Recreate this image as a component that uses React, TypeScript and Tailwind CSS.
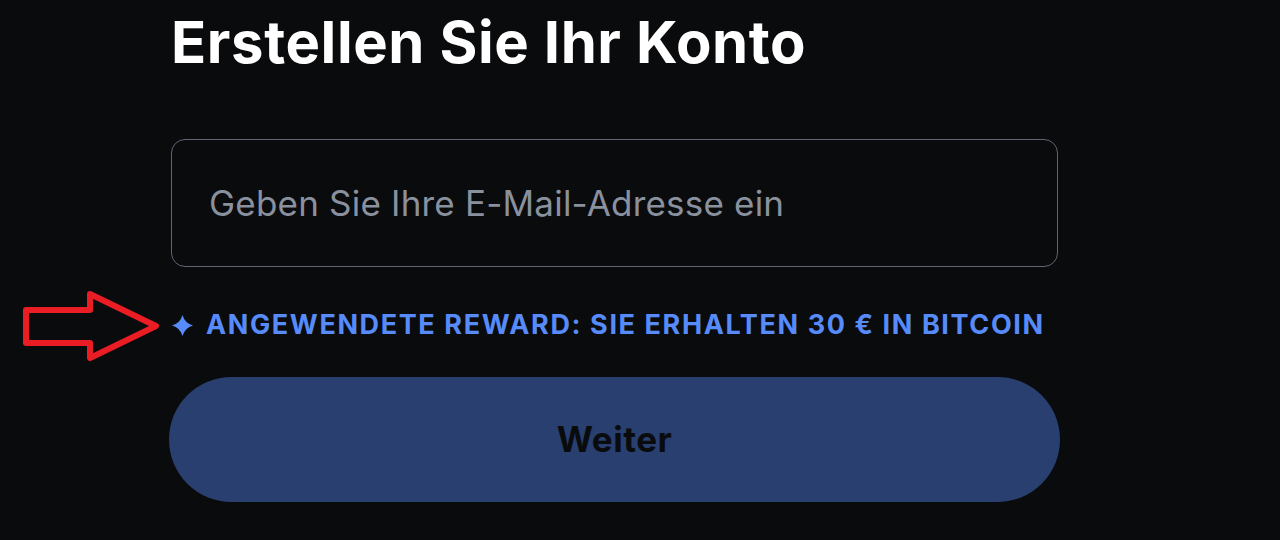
import { useState } from "react";

/** Four-point sparkle used before the reward line */
function Sparkle() {
  return (
    <svg viewBox="0 0 20 20" className="h-[21px] w-[21px] shrink-0" fill="#578bfa">
      <path d="M10 0 Q12.2 7.8 20 10 Q12.2 12.2 10 20 Q7.8 12.2 0 10 Q7.8 7.8 10 0 Z" />
    </svg>
  );
}

/** Red annotation arrow pointing at the reward text */
function RedArrow() {
  return (
    <svg
      viewBox="0 0 180 100"
      className="pointer-events-none absolute left-0 top-[280px] h-[100px] w-[180px]"
      fill="none"
      stroke="#ea1c24"
      strokeWidth="6"
      strokeLinejoin="round"
    >
      <path d="M26 30 H90 V14 L156 46 L90 78 V63 H26 Z" />
    </svg>
  );
}

export default function App() {
  const [email, setEmail] = useState("");

  return (
    <div className="relative h-[540px] w-[1280px] overflow-hidden bg-[#0a0b0d] font-['Inter',sans-serif]">
      <div className="flex w-[1100px] flex-col pl-[171px] pt-[6px]">
        <h1 className="text-[58px] font-bold leading-[72px] tracking-[0.6px] text-white">
          Erstellen Sie Ihr Konto
        </h1>

        {/* Email field */}
        <input
          value={email}
          onChange={(e) => setEmail(e.target.value)}
          placeholder="Geben Sie Ihre E-Mail-Adresse ein"
          className="mt-[61px] h-[128px] w-[887px] rounded-[14px] border border-[#5f6572] bg-transparent px-[37px] text-[35px] tracking-[0.2px] text-white outline-none placeholder:text-[#8a919e]"
        />

        {/* Reward line */}
        <div className="mt-[43px] flex items-center gap-[13px] pl-[1px]">
          <Sparkle />
          <span className="whitespace-nowrap text-[27px] font-bold uppercase leading-[30px] tracking-[1.6px] text-[#578bfa]">
            Angewendete Reward: Sie erhalten 30 € in Bitcoin
          </span>
        </div>

        <button
          disabled
          className="mt-[37px] ml-[-2px] h-[125px] w-[891px] rounded-full bg-[#283f6f] text-[35px] font-bold tracking-[0.5px] text-[#0a0b0d]"
        >
          Weiter
        </button>
      </div>

      <RedArrow />
    </div>
  );
}
